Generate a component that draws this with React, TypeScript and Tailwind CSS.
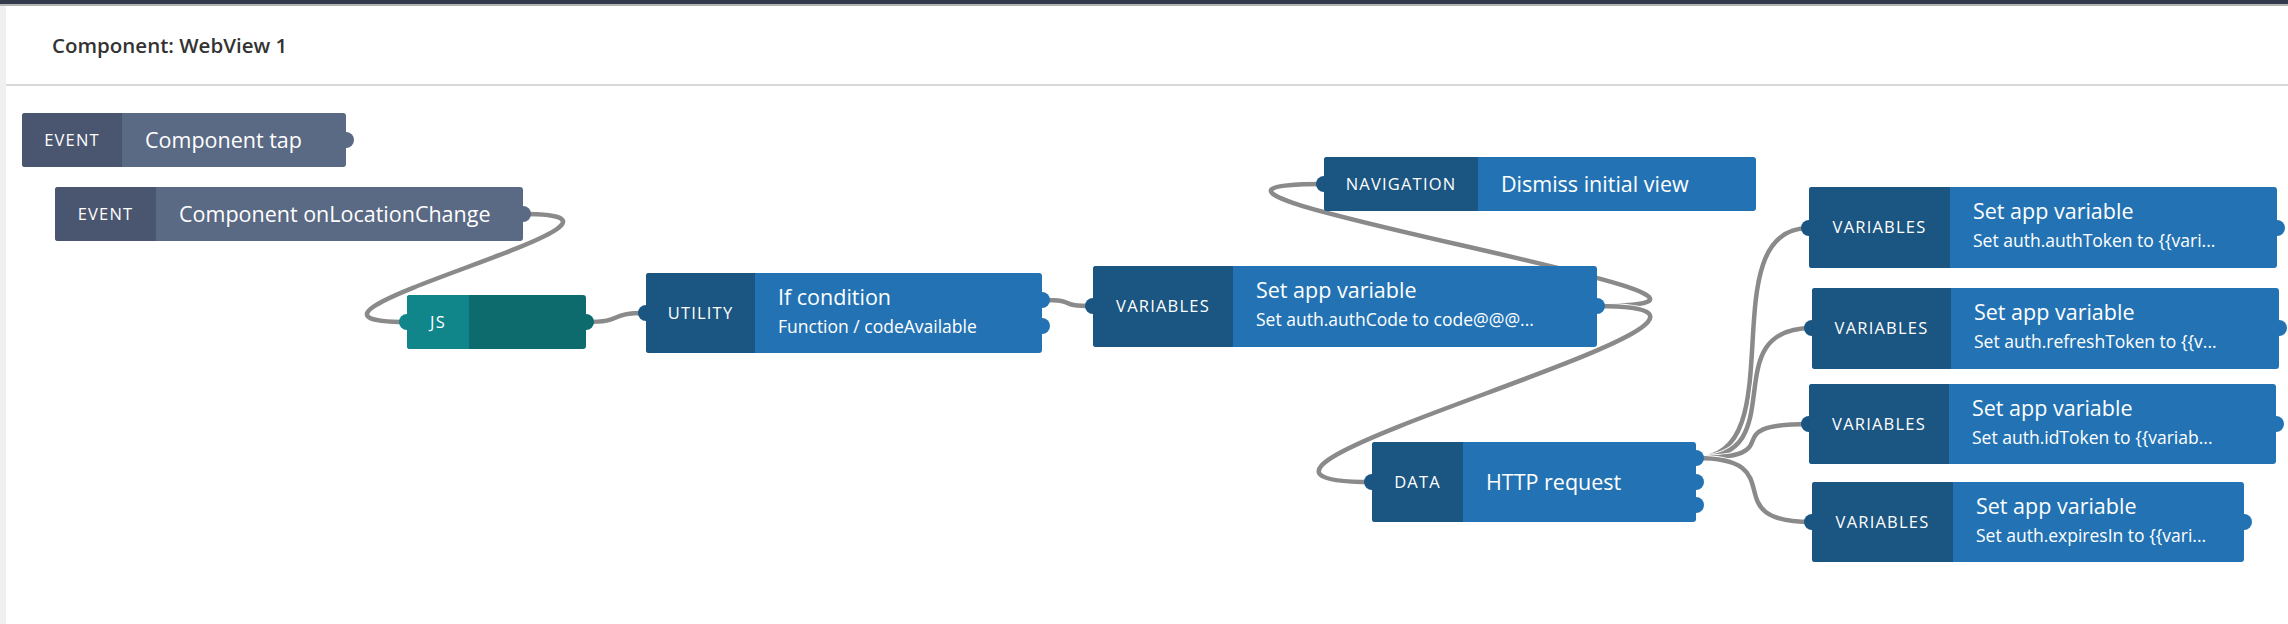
import React from "react";

type Theme = "event" | "blue" | "js";

interface NodeDef {
  x: number;
  y: number;
  w: number;
  h: number;
  lw: number;
  theme: Theme;
  label: string;
  title?: string;
  sub?: string;
  left?: number;
  right?: number[];
}

const OX = 6;
const OY = 86;

const themes: Record<Theme, { label: string; body: string; lc: string; bc: string }> = {
  event: { label: "bg-[#4a5570]", body: "bg-[#5a6984]", lc: "bg-[#4a5570]", bc: "bg-[#5a6984]" },
  blue: { label: "bg-[#1b5581]", body: "bg-[#2373b4]", lc: "bg-[#1b5581]", bc: "bg-[#2373b4]" },
  js: { label: "bg-[#10868a]", body: "bg-[#0d6b6d]", lc: "bg-[#10868a]", bc: "bg-[#0d6b6d]" },
};

const nodes: NodeDef[] = [
  { x: 22, y: 113, w: 324, h: 54, lw: 100, theme: "event", label: "EVENT", title: "Component tap", right: [27] },
  { x: 55, y: 187, w: 468, h: 54, lw: 101, theme: "event", label: "EVENT", title: "Component onLocationChange", right: [27] },
  { x: 407, y: 295, w: 179, h: 54, lw: 62, theme: "js", label: "JS", left: 27, right: [27] },
  { x: 646, y: 273, w: 396, h: 80, lw: 109, theme: "blue", label: "UTILITY", title: "If condition", sub: "Function / codeAvailable", left: 40, right: [27, 53] },
  { x: 1324, y: 157, w: 432, h: 54, lw: 154, theme: "blue", label: "NAVIGATION", title: "Dismiss initial view", left: 27 },
  { x: 1093, y: 266, w: 504, h: 81, lw: 140, theme: "blue", label: "VARIABLES", title: "Set app variable", sub: "Set auth.authCode to code@@@...", left: 40, right: [40] },
  { x: 1372, y: 442, w: 324, h: 80, lw: 91, theme: "blue", label: "DATA", title: "HTTP request", left: 40, right: [16, 40, 63] },
  { x: 1809, y: 187, w: 468, h: 81, lw: 141, theme: "blue", label: "VARIABLES", title: "Set app variable", sub: "Set auth.authToken to {{vari...", left: 41, right: [41] },
  { x: 1812, y: 288, w: 467, h: 81, lw: 139, theme: "blue", label: "VARIABLES", title: "Set app variable", sub: "Set auth.refreshToken to {{v...", left: 40, right: [40] },
  { x: 1809, y: 384, w: 467, h: 80, lw: 140, theme: "blue", label: "VARIABLES", title: "Set app variable", sub: "Set auth.idToken to {{variab...", left: 40, right: [40] },
  { x: 1812, y: 482, w: 432, h: 80, lw: 141, theme: "blue", label: "VARIABLES", title: "Set app variable", sub: "Set auth.expiresIn to {{vari...", left: 40, right: [40] },
];

const wires: [number, number, number, number, number][] = [
  [523, 214, 407, 322, 175],
  [586, 322, 646, 313, 40],
  [1042, 300, 1093, 306, 40],
  [1597, 306, 1324, 184, 260],
  [1597, 306, 1372, 482, 250],
  [1696, 458, 1809, 228, 100],
  [1696, 458, 1812, 328, 100],
  [1696, 458, 1809, 424, 100],
  [1696, 458, 1812, 522, 100],
];

function wirePath([x1, y1, x2, y2, d]: [number, number, number, number, number]) {
  return `M ${x1} ${y1} C ${x1 + d} ${y1}, ${x2 - d} ${y2}, ${x2} ${y2}`;
}

function Node({ n }: { n: NodeDef }) {
  const t = themes[n.theme];
  return (
    <div
      className={`absolute flex rounded-[3px] ${t.body}`}
      style={{ left: n.x - OX, top: n.y - OY, width: n.w, height: n.h }}
    >
      {n.left !== undefined && (
        <div className={`absolute w-[16px] h-[16px] rounded-full left-[-8px] ${t.lc}`} style={{ top: n.left - 8 }} />
      )}
      {(n.right || []).map((r, i) => (
        <div key={i} className={`absolute w-[16px] h-[16px] rounded-full right-[-8px] ${t.bc}`} style={{ top: r - 8 }} />
      ))}
      <div
        className={`relative flex items-center justify-center rounded-l-[3px] h-full text-white text-[16.5px] tracking-[1.2px] font-medium ${t.label}`}
        style={{ width: n.lw }}
      >
        {n.label}
      </div>
      <div className="relative flex flex-col justify-center pl-[23px] text-white">
        {n.sub ? (
          <div className="flex flex-col gap-[5px] pb-[6px]">
            <div className="text-[21.5px] leading-[26px] whitespace-nowrap">{n.title}</div>
            <div className="text-[17.5px] leading-[22px] whitespace-nowrap">{n.sub}</div>
          </div>
        ) : (
          n.title && <div className="text-[21.5px] leading-[26px] whitespace-nowrap">{n.title}</div>
        )}
      </div>
    </div>
  );
}

export default function App() {
  return (
    <div
      className="w-[2288px] h-[624px] bg-white flex flex-col overflow-hidden"
      style={{ fontFamily: "'Open Sans', 'Noto Sans', sans-serif" }}
    >
      <div className="h-[4px] bg-[#323a4c]" />
      <div className="h-[2px] bg-[#b3b3b3]" />
      <div className="flex flex-1">
        <div className="w-[6px] bg-[#eef0f2]" />
        <div className="flex-1 flex flex-col">
          <div className="h-[80px] flex items-center pl-[46px] border-b-2 border-[#d9d9d9]">
            <span className="text-[20.5px] font-semibold text-[#333333]">Component: WebView 1</span>
          </div>
          <div className="relative flex-1">
            <svg className="absolute inset-0" width="2282" height="538">
              <g transform={`translate(${-OX},${-OY})`} fill="none">
                {wires.map((w, i) => (
                  <g key={i}>
                    <path d={wirePath(w)} stroke="#ffffff" strokeWidth={6.5} />
                    <path d={wirePath(w)} stroke="#8a8a8a" strokeWidth={4.5} />
                  </g>
                ))}
              </g>
            </svg>
            {nodes.map((n, i) => (
              <Node key={i} n={n} />
            ))}
          </div>
        </div>
      </div>
    </div>
  );
}
